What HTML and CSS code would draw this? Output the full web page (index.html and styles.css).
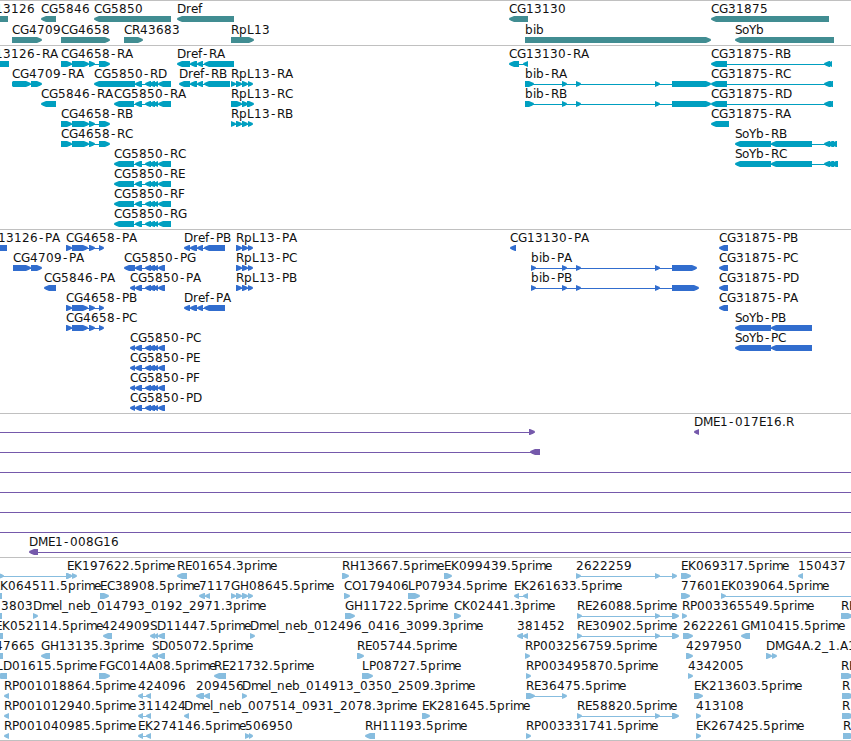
FILE: index.html
```
<!DOCTYPE html>
<html lang="en">
<head>
    <meta charset="UTF-8">
    <meta name="viewport" content="width=device-width, initial-scale=1.0">
    <title>Genome Browser</title>
    <link rel="stylesheet" href="styles.css">
</head>
<body>
    <main class="browser">
        <section class="track genes" id="genes"></section>
        <section class="track transcripts" id="transcripts"></section>
        <section class="track proteins" id="proteins"></section>
        <section class="track clones" id="clones"></section>
        <section class="track ests" id="ests"></section>
    </main>
    <script src="tracks.js"></script>
</body>
</html>
```

FILE: styles.css
```
* {
    box-sizing: border-box;
    margin: 0;
    padding: 0;
}

body {
    background-color: #fff;
    color: #000;
    overflow: hidden;
}

.browser {
    display: flex;
    flex-direction: column;
    width: 851px;
}

.track {
    height: 184px;
    border-top: 1px solid #c0c0c0;
    overflow: hidden;
}

.track svg {
    display: block;
    width: 100%;
    height: 100%;
}

.track text {
    font-family: "DejaVu Sans", sans-serif;
    font-size: 12px;
    fill: #111;
}

.link {
    shape-rendering: crispEdges;
}

.genes {
    height: 45px;
    fill: #418d92;
}

.transcripts {
    fill: #009fc0;
}

.proteins {
    fill: #316dce;
}

.clones {
    height: 144px;
    fill: #7559ab;
}

.ests {
    border-bottom: 1px solid #c0c0c0;
    fill: #87bddf;
}
```

FILE: tracks.js
```
const SVG = 'http://www.w3.org/2000/svg';

// Whole-pixel advance of each character in a label
const ADVANCE = {
    A: 8, B: 8, C: 8, D: 9, E: 7, F: 7, G: 9, H: 9, K: 8, L: 7, M: 10, O: 9, P: 7, R: 8, S: 7, Y: 7,
    b: 8, e: 7, f: 4, i: 3, l: 3, m: 10, n: 8, o: 7, p: 8, r: 5, '-': 7, '_': 6, '.': 4
};

// Blocks that several features share
const cg4658 = [[61, 72], [72, 89], [89, 95], [99, 110]];
const cg4658p = [[66, 72], [72, 88], [89, 95], [99, 104]];
const mid = [[135, 142], [145, 151], [149, 155], [153, 158]];
const cg5850 = [[114, 134], ...mid, [158, 171]];
const cg5850p = [[130, 135], ...mid, [158, 165]];
const drefp = [[184, 190], [190, 197], [197, 203], [204, 225]];
const rpl13 = [[231, 236], [236, 242], [242, 248], [248, 253]];
const rpl13p = [[236, 242], [242, 248], [248, 253]];
const bib = [[525, 534], [562, 567], [576, 581], [655, 660], [672, 711]];
const bibMid = [[531, 536], [562, 567], [576, 581], [655, 660]];
const soyb = [[735, 771], [771, 812]];
const re = [[577, 582], [655, 660], [672, 679]];
const pair = [[138, 143], [146, 151]];

// Each row is a list of features: [label, strand, blocks]
const tracks = {
    genes: [
        [['CG13126', '-', [[-22, 8]]], ['CG5846', '-', [[41, 56]]], ['CG5850', '-', [[94, 171]]], ['Dref', '-', [[177, 234]]],
            ['CG13130', '-', [[509, 528]]], ['CG31875', '-', [[711, 829]]]],
        [['CG4709', '+', [[12, 42]]], ['CG4658', '+', [[61, 110]]], ['CR43683', '+', [[124, 143]]], ['RpL13', '+', [[231, 254]]],
            ['bib', '+', [[525, 711]]], ['SoYb', '-', [[735, 834]]]]
    ],
    transcripts: [
        [['CG13126-RA', '-', [[-22, 9]]], ['CG4658-RA', '+', cg4658], ['Dref-RA', '-', [[177, 190], [190, 197], [197, 203], [204, 234]]],
            ['CG13130-RA', '-', [[509, 519], [523, 528]]], ['CG31875-RB', '-', [[711, 727], [824, 830], [827, 832]]]],
        [['CG4709-RA', '+', [[12, 14], [13, 31], [31, 42]]], ['CG5850-RD', '-', [[94, 135], ...mid, [158, 171]]],
            ['Dref-RB', '-', [[179, 190], [190, 197], [197, 203], [204, 230]]], ['RpL13-RA', '+', rpl13],
            ['bib-RA', '+', bib], ['CG31875-RC', '-', [[711, 727], [824, 831], [827, 833]]]],
        [['CG5846-RA', '-', [[41, 56]]], ['CG5850-RA', '-', cg5850], ['RpL13-RC', '+', [[231, 242], [242, 248], [247, 254]]],
            ['bib-RB', '+', bib], ['CG31875-RD', '-', [[711, 727], [824, 831], [827, 833]]]],
        [['CG4658-RB', '+', cg4658], ['RpL13-RB', '+', rpl13], ['CG31875-RA', '-', [[711, 729]]]],
        [['CG4658-RC', '+', cg4658], ['SoYb-RB', '-', [...soyb, [824, 830], [827, 834], [831, 837]]]],
        [['CG5850-RC', '-', cg5850], ['SoYb-RC', '-', [...soyb, [824, 830], [827, 834], [831, 838]]]],
        [['CG5850-RE', '-', cg5850]],
        [['CG5850-RF', '-', cg5850]],
        [['CG5850-RG', '-', cg5850]]
    ],
    proteins: [
        [['CG13126-PA', '-', [[-19, 7]]], ['CG4658-PA', '+', cg4658p], ['Dref-PB', '-', drefp], ['RpL13-PA', '+', rpl13p],
            ['CG13130-PA', '-', [[510, 516]]], ['CG31875-PB', '-', [[719, 728]]]],
        [['CG4709-PA', '+', [[13, 31], [31, 42]]], ['CG5850-PG', '-', [[124, 135], ...mid, [158, 165]]], ['RpL13-PC', '+', rpl13p],
            ['bib-PA', '+', [...bibMid, [672, 697]]], ['CG31875-PC', '-', [[719, 728]]]],
        [['CG5846-PA', '-', [[44, 56]]], ['CG5850-PA', '-', cg5850p], ['RpL13-PB', '+', rpl13p],
            ['bib-PB', '+', [...bibMid, [672, 699]]], ['CG31875-PD', '-', [[719, 728]]]],
        [['CG4658-PB', '+', cg4658p], ['Dref-PA', '-', drefp], ['CG31875-PA', '-', [[719, 728]]]],
        [['CG4658-PC', '+', cg4658p], ['SoYb-PB', '-', soyb]],
        [['CG5850-PC', '-', cg5850p], ['SoYb-PC', '-', soyb]],
        [['CG5850-PE', '-', cg5850p]],
        [['CG5850-PF', '-', cg5850p]],
        [['CG5850-PD', '-', cg5850p]]
    ],
    clones: [
        [['', '+', [[-20, -10], [529, 535]]], ['DME1-017E16.R', '-', [[694, 699]]]],
        [['', '-', [[-20, -10], [530, 540]]]],
        [['', '+', [[-20, -10], [860, 870]]]],
        [['', '+', [[-20, -10], [860, 870]]]],
        [['', '+', [[-20, -10], [860, 870]]]],
        [['', '+', [[-20, -10], [860, 870]]]],
        [['DME1-008G16', '-', [[29, 38], [860, 870]]]]
    ],
    ests: [
        [['', '+', [[-4, 4], [66, 72]]], ['EK197622.5prime', '+', [[67, 72], [72, 77]]], ['RE01654.3prime', '-', [[177, 187]]],
            ['RH13667.5prime', '+', [[342, 349]]], ['EK099439.5prime', '+', [[444, 452]]],
            ['2622259', '+', [[576, 581], [655, 660], [672, 677]]], ['EK069317.5prime', '+', [[681, 691]]], ['150437', '-', [[798, 803]]]],
        [['EK064511.5prime', '-', [[-7, 2]]], ['EC38908.5prime', '+', [[100, 109]]], ['7117', '-', [[199, 205], [205, 210]]],
            ['GH08645.5prime', '+', rpl13], ['CO179406', '+', [[344, 350]]], ['LP07934.5prime', '+', [[408, 420]]],
            ['EK261633.5prime', '-', [[514, 519], [523, 528]]], ['77601', '+', [[681, 690]]], ['EK039064.5prime', '+', [[721, 726], [860, 870]]]],
        [['3803', '-', [[-5, 2]], 1], ['Dmel_neb_014793_0192_2971.3prime', '+', [[33, 38]]], ['GH11722.5prime', '+', [[345, 355]]],
            ['CK02441.3prime', '+', [[454, 461]]], ['RE26088.5prime', '+', re], ['RP003365549.5prime', '+', [[682, 687]]], ['RH', '+', [[841, 853]]]],
        [['EK052114.5prime', '-', [[-5, 3]]], ['424909', '-', [[103, 112]], 102], ['SD11447.5prime', '-', [[150, 155], [154, 158], [158, 165]]],
            ['Dmel_neb_012496_0416_3099.3prime', '+', [[250, 255]]], ['381452', '-', [[517, 523], [523, 528]]],
            ['RE30902.5prime', '+', re], ['2622261', '+', [[683, 693]]], ['GM10415.5prime', '-', [[741, 750]]]],
        [['47665', '-', [[-5, 3]]], ['GH13135.3prime', '-', [[41, 50]]], ['SD05072.5prime', '-', [[152, 158], [158, 165]]],
            ['RE05744.5prime', '+', [[357, 364]]], ['RP003256759.5prime', '+', [[525, 530]]], ['4297950', '+', [[686, 693]]],
            ['DMG4A.2_1.A1', '+', [[766, 772], [772, 777]]]],
        [['LD01615.5prime', '-', [[-4, 7]]], ['FGC014A08.5prime', '+', [[99, 110]]], ['RE21732.5prime', '-', [[214, 226]]],
            ['LP08727.5prime', '+', [[362, 373]]], ['RP003495870.5prime', '+', [[526, 531]]], ['4342005', '+', [[688, 693]]], ['RH', '+', [[841, 853]]]],
        [['RP001018864.5prime', '-', [[4, 9]]], ['424096', '-', pair], ['209456', '-', [[196, 204], [204, 210]]],
            ['Dmel_neb_014913_0350_2509.3prime', '+', [[242, 247]]], ['RE36475.5prime', '+', [[526, 535], [562, 567]]],
            ['EK213603.5prime', '+', [[694, 703]]], ['R', '+', [[842, 854]]]],
        [['RP001012940.5prime', '-', [[4, 9]]], ['311424', '-', pair], ['Dmel_neb_007514_0931_2078.3prime', '-', [[184, 189]]],
            ['EK281645.5prime', '+', [[422, 430]]], ['RE58820.5prime', '+', re], ['413108', '+', [[696, 701]]], ['R', '+', [[842, 854]]]],
        [['RP001040985.5prime', '-', [[4, 9]]], ['EK274146.5prime', '-', pair], ['506950', '+', [[245, 250], [249, 253]]],
            ['RH11193.5prime', '-', [[365, 375]]], ['RP003331741.5prime', '+', [[526, 531]]], ['EK267425.5prime', '+', [[696, 701]]],
            ['R', '+', [[843, 855]]]]
    ]
};

function add(parent, name, attrs) {
    const el = document.createElementNS(SVG, name);
    for (const key in attrs) {
        el.setAttribute(key, attrs[key]);
    }
    parent.appendChild(el);
    return el;
}

// Block with a pointed end in the strand direction
function drawBlock(svg, strand, x1, x2, y) {
    const head = Math.min(5, x2 - x1);
    const dir = strand === '+' ? 1 : -1;
    const tip = strand === '+' ? x2 : x1;
    const back = strand === '+' ? x1 : x2;
    const neck = tip - dir * head;
    const mid = tip - dir * head * 0.4;
    add(svg, 'polygon', {
        points: `${back},${y} ${neck},${y} ${mid},${y + 1.2} ${tip},${y + 2.4} ${tip},${y + 3.6} ${mid},${y + 4.8} ${neck},${y + 6} ${back},${y + 6}`
    });
}

function drawLabel(svg, label, x, y) {
    const xs = [];
    for (const ch of label) {
        // the dash glyph is narrower than its cell
        xs.push(ch === '-' ? x + 1 : x);
        x += ADVANCE[ch] || 8;
    }
    add(svg, 'text', { x: xs.join(' '), y: y }).textContent = label;
}

for (const id in tracks) {
    const svg = add(document.getElementById(id), 'svg', {});
    const pitch = id === 'genes' ? 21 : 20;

    tracks[id].forEach((row, i) => {
        const y = 15 + i * pitch;
        row.forEach(([label, strand, blocks, labelX]) => {
            const start = blocks[0][0];
            const end = blocks[blocks.length - 1][1];
            if (blocks.length > 1) {
                add(svg, 'rect', { class: 'link', x: start + 3, y: y + 3, width: end - start - 6, height: 1 });
            }
            blocks.forEach(([x1, x2]) => drawBlock(svg, strand, x1, x2, y));
            drawLabel(svg, label, labelX === undefined ? start : labelX, y - 3);
        });
    });
}
```
